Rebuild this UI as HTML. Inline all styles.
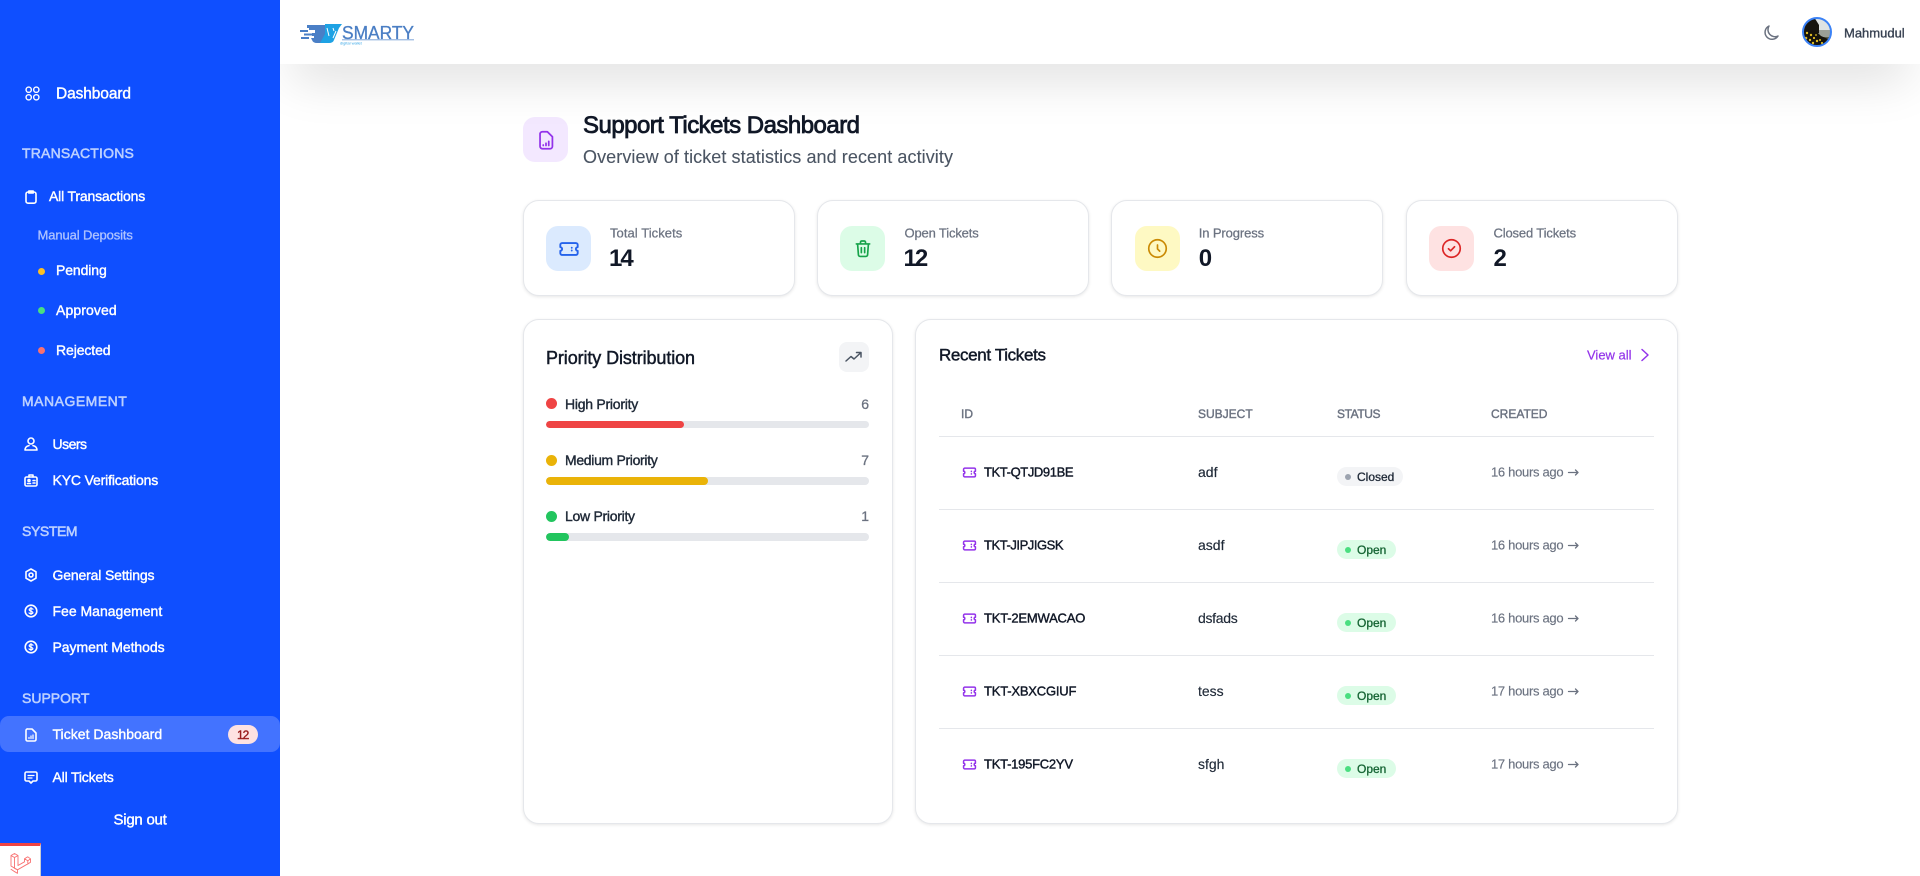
<!DOCTYPE html>
<html lang="en">
<head>
<meta charset="utf-8">
<title>Support Tickets Dashboard</title>
<style>
html,body{margin:0;padding:0;width:1920px;height:876px;overflow:hidden;background:#fff;font-family:"Liberation Sans",sans-serif;color:#111827}
*{box-sizing:border-box}
.t{position:absolute;white-space:nowrap;line-height:1;transform:translateY(-50%)}
.a{position:absolute}
svg{position:absolute;overflow:visible}
#side{position:absolute;left:0;top:0;width:280px;height:876px;background:#0f4fff;z-index:3;color:#fff}
#side .n{font-size:14px;-webkit-text-stroke:.4px #fff;color:#fff}
#side .h{font-size:14px;color:#bcd0ff;-webkit-text-stroke:.55px #bcd0ff}
#side svg{fill:none;stroke:#fff;stroke-width:1.6;stroke-linecap:round;stroke-linejoin:round}
#top{position:absolute;left:280px;top:0;width:1640px;height:64px;background:#fff;box-shadow:0 25px 50px -12px rgba(0,0,0,.15);z-index:2}
.card{position:absolute;background:#fff;border:1px solid #e5e7eb;border-radius:16px;box-shadow:0 1px 3px rgba(0,0,0,.1)}
.ib{position:absolute;width:45px;height:45px;border-radius:12px}
.lab{font-size:13px;color:#6b7280;-webkit-text-stroke:.25px #6b7280}
.num{font-size:24px;font-weight:700;color:#111827}
.med{font-size:14px;color:#1f2937;-webkit-text-stroke:.4px #1f2937}
.val{font-size:14px;color:#6b7280;-webkit-text-stroke:.3px #6b7280}
.track{position:absolute;left:546px;width:323px;background:#e5e7eb;border-radius:4px;overflow:hidden}
.track i{display:block;height:100%;border-radius:4px}
.th{font-size:12px;color:#6b7280;-webkit-text-stroke:.4px #6b7280}
.line{position:absolute;left:939px;width:715px;height:1px;background:#e5e7eb}
.id{font-size:13px;color:#111827;-webkit-text-stroke:.4px #111827}
.sub{font-size:14px;color:#1f2937;-webkit-text-stroke:.15px #1f2937}
.time{font-size:13px;color:#6b7280;-webkit-text-stroke:.15px #6b7280}
.badge{position:absolute;height:19px;border-radius:10px}
.badge i{position:absolute;left:8px;top:6.5px;width:6px;height:6px;border-radius:50%}
.badge b{position:absolute;left:20px;top:0;font-size:12px;line-height:20px;font-weight:400;-webkit-text-stroke:.3px currentColor;white-space:nowrap}
.open{width:59px;background:#dcfce7;color:#166534}.open i{background:#4ade80}
.closed{width:66px;background:#f3f4f6;color:#1f2937}.closed i{background:#9ca3af}
.tk{fill:none;stroke:#9333ea;stroke-width:2.4;stroke-linecap:round;stroke-linejoin:round}
.arr{fill:none;stroke:#6b7280;stroke-width:1.3;stroke-linecap:round;stroke-linejoin:round}
</style>
</head>
<body>

<aside id="side">
  <svg style="left:25px;top:86px" width="15" height="15" viewBox="0 0 17 17"><circle cx="4.2" cy="4.2" r="3"/><circle cx="12.8" cy="4.2" r="3"/><circle cx="4.2" cy="12.8" r="3"/><circle cx="12.8" cy="12.8" r="3"/></svg>
  <span class="t n" style="left:56px;top:93.5px;font-size:15.5px;letter-spacing:-.1px">Dashboard</span>

  <span class="t h" style="left:22px;top:153px;letter-spacing:.2px">TRANSACTIONS</span>
  <svg style="left:25px;top:190px" width="12" height="14" viewBox="0 0 12 14"><rect x="1" y="2" width="10" height="11.2" rx="2"/><path d="M3.8 1h4.4v2H3.8z"/></svg>
  <span class="t n" style="left:49px;top:196px;letter-spacing:-.17px">All Transactions</span>
  <span class="t" style="left:37.500px;top:235px;font-size:13px;color:#aec3ff;letter-spacing:-.1px;-webkit-text-stroke:.3px #aec3ff">Manual Deposits</span>

  <span class="a" style="left:38px;top:267.500px;width:7px;height:7px;border-radius:50%;background:#fbbf24"></span>
  <span class="t n" style="left:56px;top:270px;letter-spacing:-.1px">Pending</span>
  <span class="a" style="left:38px;top:307px;width:7px;height:7px;border-radius:50%;background:#4ade80"></span>
  <span class="t n" style="left:56px;top:310px;letter-spacing:.1px">Approved</span>
  <span class="a" style="left:38px;top:347px;width:7px;height:7px;border-radius:50%;background:#f87171"></span>
  <span class="t n" style="left:56px;top:350px;letter-spacing:-.1px">Rejected</span>

  <span class="t h" style="left:22px;top:401px;letter-spacing:.5px">MANAGEMENT</span>
  <svg style="left:24px;top:437px" width="14" height="14" viewBox="0 0 14 14" stroke-width="1.3"><circle cx="7" cy="4" r="3"/><path d="M1 13c0-3 2-4 4-4.400M13 13c0-3-2-4-4-4.400M1 13h12"/></svg>
  <span class="t n" style="left:52.500px;top:444px;letter-spacing:-.5px">Users</span>
  <svg style="left:24px;top:474px" width="14" height="13" viewBox="0 0 14 13"><rect x="1" y="3" width="12" height="9" rx="1.500"/><path d="M5 3V1h4v2M3.500 9.500h3M9 6.500h2M9 9h2"/><circle cx="5" cy="6.500" r="1"/></svg>
  <span class="t n" style="left:52.500px;top:480px;letter-spacing:-.15px">KYC Verifications</span>

  <span class="t h" style="left:22px;top:531px;letter-spacing:-.4px">SYSTEM</span>
  <svg style="left:24px;top:568px" width="14" height="14" viewBox="0 0 14 14"><path d="M7 1l5 2.800v6.400L7 13l-5-2.800V3.800z"/><circle cx="7" cy="7" r="2"/></svg>
  <span class="t n" style="left:52.500px;top:575px;letter-spacing:-.15px">General Settings</span>
  <svg style="left:24px;top:604px" width="14" height="14" viewBox="0 0 14 14"><circle cx="7" cy="7" r="5.800"/><path d="M9 5.200C8.500 4.400 5.200 4.200 5.200 5.800S8.900 7.200 8.900 8.600 5.500 9.900 5 8.900M7 3.500v7" stroke-width="1.200"/></svg>
  <span class="t n" style="left:52.500px;top:611px">Fee Management</span>
  <svg style="left:24px;top:640px" width="14" height="14" viewBox="0 0 14 14"><circle cx="7" cy="7" r="5.800"/><path d="M9 5.200C8.500 4.400 5.200 4.200 5.200 5.800S8.900 7.200 8.900 8.600 5.500 9.900 5 8.900M7 3.500v7" stroke-width="1.200"/></svg>
  <span class="t n" style="left:52.500px;top:647px;letter-spacing:-.05px">Payment Methods</span>

  <span class="t h" style="left:22px;top:698px">SUPPORT</span>
  <div class="a" style="left:0;top:716px;width:280px;height:36px;border-radius:9px;background:#4373ff"></div>
  <svg style="left:25px;top:728px" width="12" height="14" viewBox="0 0 12 14"><path d="M3 1h4l4 4v6.500A1.500 1.500 0 0 1 9.500 13h-7A1.500 1.500 0 0 1 1 11.500v-9A1.500 1.500 0 0 1 3 1z"/><path d="M4 10.500v-1M6 10.500V8M8 10.500V7" stroke-width="1.200"/></svg>
  <span class="t n" style="left:52.500px;top:734px;letter-spacing:.03px">Ticket Dashboard</span>
  <div class="a" style="left:228px;top:725px;width:30px;height:19px;border-radius:10px;background:#fee2e2"></div>
  <span class="t" style="left:237px;top:735px;font-size:12px;letter-spacing:-1px;color:#991b1b;-webkit-text-stroke:.4px #991b1b">12</span>
  <svg style="left:24px;top:771px" width="14" height="13" viewBox="0 0 14 13"><path d="M2.500 1h9A1.500 1.500 0 0 1 13 2.500v6A1.500 1.500 0 0 1 11.500 10H9l-2 2-2-2H2.500A1.500 1.500 0 0 1 1 8.500v-6A1.500 1.500 0 0 1 2.500 1z"/><path d="M4 4.500h6M4 7h4" stroke-width="1.200"/></svg>
  <span class="t n" style="left:52.500px;top:777px;letter-spacing:-.18px">All Tickets</span>
  <span class="t n" style="left:113.500px;top:820px;font-size:15px;letter-spacing:-.25px">Sign out</span>

  <div class="a" style="left:0;top:843px;width:41px;height:33px;background:#fff;border-top:3px solid #ef4444;border-right:1px solid #c9ccd1">
    <svg style="left:10px;top:6px" width="21" height="22" viewBox="0 0 21 22"><path style="stroke:#f87171;stroke-width:.9" d="M1 3.500L4.500 1.500 8 3.500v10l6.500-3.700V6.800l3.300-2 2.700 2v3.500l-13 7.500-3.500-2L1 14zM1 3.500l3.500 2 3.500-2M4.500 5.500v10.800M14.500 6.800l3.300 2 2.700-2M17.800 8.800v3.400M4.500 16.300l3 1.500v3.500l-3.500-2-3-2"/></svg>
  </div>
</aside>

<header id="top"></header>

<!-- logo -->
<svg style="left:300px;top:20px;z-index:4" width="120" height="26" viewBox="0 0 120 26">
  <g fill="#4a7fc6">
    <rect x="0" y="10" width="8" height="2"/><rect x="4" y="13.500" width="9" height="2"/><rect x="1" y="17" width="8" height="2"/>
    <path d="M7 5h19v18H17q-4 0-5-3l-1-2h3v-2h-2v-3h3v-3H9v-2h3V8H7z"/>
  </g>
  <path d="M25 4h17l-3 4-5 12q-1 3-5 3h-9l5-9z" fill="#1ea2e4"/>
  <path d="M27 8l2 8M33 8l1 3M36 11l-3 7" stroke="#fff" stroke-width="1" fill="none"/>
  <text x="42" y="18.800" font-family="Liberation Sans" font-size="18.500" fill="#4a7ec4" stroke="#4a7ec4" stroke-width=".3" textLength="72" lengthAdjust="spacingAndGlyphs">SMARTY</text>
  <rect x="42" y="19.300" width="72" height="1" fill="#7fa6d8"/>
  <text x="40" y="24.500" font-family="Liberation Sans" font-size="4" fill="#3aa7e6">digital wallet</text>
</svg>

<!-- header right -->
<svg style="left:1762.500px;top:25px;z-index:4;fill:none;stroke:#6b7280;stroke-width:1.500;stroke-linecap:round;stroke-linejoin:round" width="16" height="16" viewBox="0 0 16 16"><path d="M6 1A7 7 0 0 0 15 11 7 7 0 1 1 6 1z"/></svg>
<svg style="left:1802px;top:17px;z-index:4" width="30" height="30" viewBox="0 0 30 30">
  <defs><clipPath id="av"><circle cx="15" cy="15" r="13.500"/></clipPath></defs>
  <g clip-path="url(#av)">
    <rect width="30" height="30" fill="#dfe3e3"/>
    <rect y="13" width="30" height="8" fill="#9a9f96"/>
    <rect y="20" width="30" height="10" fill="#5b5f4a"/>
    <path d="M0 0h12l5 8v8H0z" fill="#16140f"/>
    <path d="M0 14h14l5 5 7 3 1 8H0z" fill="#15130c"/>
    <g fill="#e0bd22"><circle cx="5" cy="16" r="1.200"/><circle cx="9" cy="18" r="1.200"/><circle cx="4" cy="21" r="1.300"/><circle cx="8" cy="23" r="1.200"/><circle cx="12" cy="21" r="1.100"/><circle cx="15" cy="24" r="1.200"/><circle cx="11" cy="26" r="1.200"/><circle cx="18" cy="23" r="1"/><circle cx="20" cy="26" r="1.100"/><circle cx="14" cy="18" r=".9"/><circle cx="6" cy="26" r="1"/></g>
  </g>
  <circle cx="15" cy="15" r="14" fill="none" stroke="#3b82f6" stroke-width="2"/>
</svg>
<span class="t" style="left:1844px;top:33px;font-size:13px;color:#374151;-webkit-text-stroke:.35px #374151;z-index:4">Mahmudul</span>

<!-- page heading -->
<div class="a" style="left:523px;top:117px;width:45px;height:45px;border-radius:12px;background:#f3e8ff"></div>
<svg style="left:534.500px;top:129px;fill:none;stroke:#9333ea;stroke-width:1.900;stroke-linecap:round;stroke-linejoin:round" width="22" height="22" viewBox="0 0 24 24"><path d="M8 3h5.500L19 8.500V19a2.500 2.500 0 0 1-2.500 2.500h-8.500A2.500 2.500 0 0 1 5.500 19V5.500A2.500 2.500 0 0 1 8 3z"/><path d="M9 18v-.5M12 18v-2.500M15 18v-4.500"/></svg>
<span class="t" style="left:583px;top:126px;font-size:24px;letter-spacing:-.52px;color:#111827;-webkit-text-stroke:.8px #111827">Support Tickets Dashboard</span>
<span class="t" style="left:583px;top:157px;font-size:18px;letter-spacing:.08px;color:#4b5563;-webkit-text-stroke:.1px #4b5563">Overview of ticket statistics and recent activity</span>

<!-- stat cards -->
<div class="card" style="left:523px;top:200px;width:271.500px;height:95.500px"></div>
<div class="ib" style="left:546px;top:226px;background:#dbeafe"></div>
<svg style="left:557.500px;top:237.500px;fill:none;stroke:#2563eb;stroke-width:2;stroke-linecap:round;stroke-linejoin:round" width="22" height="22" viewBox="0 0 24 24"><path d="M4.500 5.500h15a2 2 0 0 1 2 2V10a2 2 0 0 0 0 4v2.500a2 2 0 0 1-2 2h-15a2 2 0 0 1-2-2V14a2 2 0 0 0 0-4V7.500a2 2 0 0 1 2-2z"/><path d="M15 10.500v.2M15 13.500v.2"/></svg>
<span class="t lab" style="left:610px;top:233px;letter-spacing:.06px">Total Tickets</span>
<span class="t num" style="left:609px;top:259px;letter-spacing:-2px">14</span>

<div class="card" style="left:817px;top:200px;width:271.500px;height:95.500px"></div>
<div class="ib" style="left:840px;top:226px;background:#dcfce7"></div>
<svg style="left:852.500px;top:238px;fill:none;stroke:#16a34a;stroke-width:2;stroke-linecap:round;stroke-linejoin:round" width="20" height="21" viewBox="0 0 24 24"><path d="M4 6.500h16M9 6.500V4.500A1.500 1.500 0 0 1 10.500 3h3A1.500 1.500 0 0 1 15 4.500v2M5.500 6.500l1 13A2 2 0 0 0 8.500 21.500h7a2 2 0 0 0 2-2l1-13M10 11v6M14 11v6"/></svg>
<span class="t lab" style="left:904.500px;top:233px;letter-spacing:-.15px">Open Tickets</span>
<span class="t num" style="left:903.500px;top:259px;letter-spacing:-2px">12</span>

<div class="card" style="left:1111px;top:200px;width:271.500px;height:95.500px"></div>
<div class="ib" style="left:1135px;top:226px;background:#fef9c3"></div>
<svg style="left:1147px;top:238px;fill:none;stroke:#ca8a04;stroke-width:1.900;stroke-linecap:round;stroke-linejoin:round" width="21" height="21" viewBox="0 0 24 24"><circle cx="12" cy="12" r="10"/><path d="M12 8v4.500l2.500 2.500"/></svg>
<span class="t lab" style="left:1198.700px;top:233px;letter-spacing:-.1px">In Progress</span>
<span class="t num" style="left:1198.700px;top:259px">0</span>

<div class="card" style="left:1406px;top:200px;width:271.500px;height:95.500px"></div>
<div class="ib" style="left:1429px;top:226px;background:#fee2e2"></div>
<svg style="left:1441px;top:238px;fill:none;stroke:#dc2626;stroke-width:1.900;stroke-linecap:round;stroke-linejoin:round" width="21" height="21" viewBox="0 0 24 24"><circle cx="12" cy="12" r="10"/><path d="M8.500 12.300l2.500 2.300 4.500-4.600"/></svg>
<span class="t lab" style="left:1493.500px;top:233px;letter-spacing:-.15px">Closed Tickets</span>
<span class="t num" style="left:1493.500px;top:259px">2</span>

<!-- priority -->
<div class="card" style="left:523px;top:319px;width:370px;height:505px"></div>
<span class="t" style="left:546px;top:357.500px;font-size:18px;letter-spacing:-.1px;color:#111827;-webkit-text-stroke:.45px #111827">Priority Distribution</span>
<div class="a" style="left:839px;top:342px;width:30px;height:30px;border-radius:8px;background:#f3f4f6"></div>
<svg style="left:844px;top:347px;fill:none;stroke:#4b5563;stroke-width:1.500;stroke-linecap:round;stroke-linejoin:round" width="20" height="20" viewBox="0 0 20 20"><path d="M2 14l5-4.500 3 2.500 7-6.500M12.500 5.500H17V10"/></svg>

<span class="a" style="left:546px;top:398px;width:11px;height:11px;border-radius:50%;background:#ef4444"></span>
<span class="t med" style="left:565px;top:404px;letter-spacing:-.25px">High Priority</span>
<span class="t val" style="right:1051px;top:404px">6</span>
<div class="track" style="top:421px;height:7px"><i style="width:138px;background:#ef4444"></i></div>

<span class="a" style="left:546px;top:455px;width:11px;height:11px;border-radius:50%;background:#eab308"></span>
<span class="t med" style="left:565px;top:460px;letter-spacing:-.32px">Medium Priority</span>
<span class="t val" style="right:1051px;top:460px">7</span>
<div class="track" style="top:477px;height:8px"><i style="width:162px;background:#eab308"></i></div>

<span class="a" style="left:546px;top:511px;width:11px;height:11px;border-radius:50%;background:#22c55e"></span>
<span class="t med" style="left:565px;top:516px;letter-spacing:-.28px">Low Priority</span>
<span class="t val" style="right:1051px;top:516px">1</span>
<div class="track" style="top:533px;height:8px"><i style="width:23px;background:#22c55e"></i></div>

<!-- recent -->
<div class="card" style="left:915px;top:319px;width:762.500px;height:505px"></div>
<span class="t" style="left:939px;top:355px;font-size:17px;letter-spacing:-.35px;color:#111827;-webkit-text-stroke:.45px #111827">Recent Tickets</span>
<span class="t" style="left:1587px;top:355px;font-size:13px;color:#9333ea;-webkit-text-stroke:.2px #9333ea">View all</span>
<svg style="left:1640px;top:348px;fill:none;stroke:#9333ea;stroke-width:1.500;stroke-linecap:round;stroke-linejoin:round" width="10" height="14" viewBox="0 0 10 14"><path d="M2 1.500L8 7l-6 5.500"/></svg>

<span class="t th" style="left:961px;top:414px">ID</span>
<span class="t th" style="left:1198px;top:414px">SUBJECT</span>
<span class="t th" style="left:1337px;top:414px;letter-spacing:-.4px">STATUS</span>
<span class="t th" style="left:1491px;top:414px">CREATED</span>

<div class="line" style="top:436px"></div>
<div class="line" style="top:509px"></div>
<div class="line" style="top:582px"></div>
<div class="line" style="top:655px"></div>
<div class="line" style="top:728px"></div>

<!-- rows -->
<svg class="tk" style="left:961.500px;top:465px" width="15" height="15" viewBox="0 0 24 24"><path d="M4.500 5h15a2 2 0 0 1 2 2v3a2 2 0 0 0 0 4v3a2 2 0 0 1-2 2h-15a2 2 0 0 1-2-2v-3a2 2 0 0 0 0-4V7a2 2 0 0 1 2-2z"/><path d="M15 10v.3M15 14v.3"/></svg>
<span class="t id" style="left:984px;top:472px;letter-spacing:-.4px">TKT-QTJD91BE</span>
<span class="t sub" style="left:1198px;top:472px">adf</span>
<div class="badge closed" style="left:1337px;top:467px"><i></i><b>Closed</b></div>
<span class="t time" style="left:1491px;top:472px;letter-spacing:-.3px">16 hours ago</span>
<svg class="arr" style="left:1568px;top:467.500px" width="11" height="9" viewBox="0 0 11 9"><path d="M.5 4.500h9.500M7.500 2l2.500 2.500L7.500 7"/></svg>

<svg class="tk" style="left:961.500px;top:538px" width="15" height="15" viewBox="0 0 24 24"><path d="M4.500 5h15a2 2 0 0 1 2 2v3a2 2 0 0 0 0 4v3a2 2 0 0 1-2 2h-15a2 2 0 0 1-2-2v-3a2 2 0 0 0 0-4V7a2 2 0 0 1 2-2z"/><path d="M15 10v.3M15 14v.3"/></svg>
<span class="t id" style="left:984px;top:545px;letter-spacing:-.45px">TKT-JIPJIGSK</span>
<span class="t sub" style="left:1198px;top:545px">asdf</span>
<div class="badge open" style="left:1337px;top:540px"><i></i><b>Open</b></div>
<span class="t time" style="left:1491px;top:545px;letter-spacing:-.3px">16 hours ago</span>
<svg class="arr" style="left:1568px;top:540.500px" width="11" height="9" viewBox="0 0 11 9"><path d="M.5 4.500h9.500M7.500 2l2.500 2.500L7.500 7"/></svg>

<svg class="tk" style="left:961.500px;top:611px" width="15" height="15" viewBox="0 0 24 24"><path d="M4.500 5h15a2 2 0 0 1 2 2v3a2 2 0 0 0 0 4v3a2 2 0 0 1-2 2h-15a2 2 0 0 1-2-2v-3a2 2 0 0 0 0-4V7a2 2 0 0 1 2-2z"/><path d="M15 10v.3M15 14v.3"/></svg>
<span class="t id" style="left:984px;top:618px;letter-spacing:-.2px">TKT-2EMWACAO</span>
<span class="t sub" style="left:1198px;top:618px;letter-spacing:-.3px">dsfads</span>
<div class="badge open" style="left:1337px;top:613px"><i></i><b>Open</b></div>
<span class="t time" style="left:1491px;top:618px;letter-spacing:-.3px">16 hours ago</span>
<svg class="arr" style="left:1568px;top:613.500px" width="11" height="9" viewBox="0 0 11 9"><path d="M.5 4.500h9.500M7.500 2l2.500 2.500L7.500 7"/></svg>

<svg class="tk" style="left:961.500px;top:684px" width="15" height="15" viewBox="0 0 24 24"><path d="M4.500 5h15a2 2 0 0 1 2 2v3a2 2 0 0 0 0 4v3a2 2 0 0 1-2 2h-15a2 2 0 0 1-2-2v-3a2 2 0 0 0 0-4V7a2 2 0 0 1 2-2z"/><path d="M15 10v.3M15 14v.3"/></svg>
<span class="t id" style="left:984px;top:691px;letter-spacing:-.2px">TKT-XBXCGIUF</span>
<span class="t sub" style="left:1198px;top:691px">tess</span>
<div class="badge open" style="left:1337px;top:686px"><i></i><b>Open</b></div>
<span class="t time" style="left:1491px;top:691px;letter-spacing:-.3px">17 hours ago</span>
<svg class="arr" style="left:1568px;top:686.500px" width="11" height="9" viewBox="0 0 11 9"><path d="M.5 4.500h9.500M7.500 2l2.500 2.500L7.500 7"/></svg>

<svg class="tk" style="left:961.500px;top:757px" width="15" height="15" viewBox="0 0 24 24"><path d="M4.500 5h15a2 2 0 0 1 2 2v3a2 2 0 0 0 0 4v3a2 2 0 0 1-2 2h-15a2 2 0 0 1-2-2v-3a2 2 0 0 0 0-4V7a2 2 0 0 1 2-2z"/><path d="M15 10v.3M15 14v.3"/></svg>
<span class="t id" style="left:984px;top:764px;letter-spacing:-.25px">TKT-195FC2YV</span>
<span class="t sub" style="left:1198px;top:764px">sfgh</span>
<div class="badge open" style="left:1337px;top:759px"><i></i><b>Open</b></div>
<span class="t time" style="left:1491px;top:764px;letter-spacing:-.3px">17 hours ago</span>
<svg class="arr" style="left:1568px;top:759.500px" width="11" height="9" viewBox="0 0 11 9"><path d="M.5 4.500h9.500M7.500 2l2.500 2.500L7.500 7"/></svg>

</body>
</html>
